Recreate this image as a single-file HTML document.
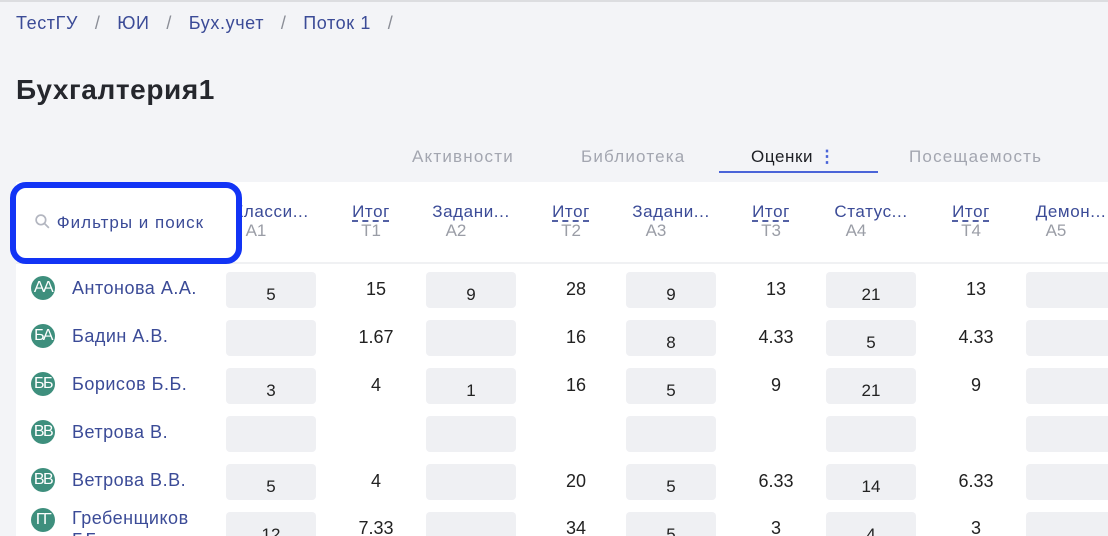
<!DOCTYPE html><html style="height:536px;overflow:hidden"><head><meta charset="utf-8"><style>
body{margin:0;width:1108px;height:536px;overflow:hidden;background:#f3f4f7;font-family:"Liberation Sans","Noto Sans CJK SC",sans-serif;position:relative}
.a{position:absolute;white-space:nowrap}
.bc{top:13px;font-size:18px;letter-spacing:0.6px;color:#3b4b97}
.sl{color:#8a8d96}
.tab{top:147px;font-size:17px;letter-spacing:1.2px;color:#a3a6b0}
.card{position:absolute;left:16px;top:182px;width:1092px;height:354px;background:#fff}
.hl{left:16px;top:262px;width:1092px;height:2px;background:#f0f1f3}
.h{width:100px;text-align:center;font-size:17px;letter-spacing:0.6px;color:#3b4b97;top:202px}
.h u{text-decoration:underline dashed #3b4b97;text-underline-offset:4px}
.s{width:100px;text-align:center;font-size:17px;color:#9a9da6;top:221px}
.b{width:90px;height:36px;background:#eff0f3;border-radius:4px;text-align:center;font-size:17px;color:#222;line-height:46px}
.t{width:100px;text-align:center;font-size:18px;color:#222}
.av{left:31px;width:24px;height:24px;border-radius:50%;background:#3e8f7d;color:#fff;font-size:16px;text-align:center;line-height:24px;letter-spacing:-1.5px}
.n{left:72px;font-size:18px;letter-spacing:0.5px;color:#3b4b97}
</style></head><body>
<div class="a" style="left:0;top:0;width:1108px;height:2px;background:#dcdde0"></div>
<div class="a bc" style="left:16px">ТестГУ <span class="sl">&nbsp;&nbsp;/&nbsp;&nbsp;</span> ЮИ <span class="sl">&nbsp;&nbsp;/&nbsp;&nbsp;</span> Бух.учет <span class="sl">&nbsp;&nbsp;/&nbsp;&nbsp;</span> Поток 1 <span class="sl">&nbsp;&nbsp;/</span></div>
<div class="a" style="left:16px;top:74px;font-size:28px;letter-spacing:0.6px;font-weight:bold;color:#25272d">Бухгалтерия1</div>
<div class="a tab" style="left:412px">Активности</div>
<div class="a tab" style="left:581px">Библиотека</div>
<div class="a tab" style="left:751px;color:#1d1f24;letter-spacing:0.6px">Оценки <span style="color:#4a64d8;font-weight:bold">⋮</span></div>
<div class="a tab" style="left:909px">Посещаемость</div>
<div class="a" style="left:719px;top:171px;width:159px;height:2px;background:#4a64d8"></div>
<div class="card"></div>
<div class="a hl"></div>
<div class="a h" style="left:221px">Класси...</div><div class="a s" style="left:206px">A1</div>
<div class="a h" style="left:321px"><u>Итог</u></div><div class="a s" style="left:321px">T1</div>
<div class="a h" style="left:421px">Задани...</div><div class="a s" style="left:406px">A2</div>
<div class="a h" style="left:521px"><u>Итог</u></div><div class="a s" style="left:521px">T2</div>
<div class="a h" style="left:621px">Задани...</div><div class="a s" style="left:606px">A3</div>
<div class="a h" style="left:721px"><u>Итог</u></div><div class="a s" style="left:721px">T3</div>
<div class="a h" style="left:821px">Статус...</div><div class="a s" style="left:806px">A4</div>
<div class="a h" style="left:921px"><u>Итог</u></div><div class="a s" style="left:921px">T4</div>
<div class="a h" style="left:1021px">Демон...</div><div class="a s" style="left:1006px">A5</div>
<div class="a" style="left:10px;top:182px;width:220px;height:70px;border:6px solid #1234f5;border-radius:16px;background:#fff"></div>
<div class="a" style="left:34px;top:213px;font-size:17px;letter-spacing:1px;color:#3b4b97"><svg width="17" height="17" style="vertical-align:-2px" viewBox="0 0 16 16"><circle cx="6.5" cy="6.5" r="4.5" fill="none" stroke="#b3b6c0" stroke-width="1.6"/><path d="M10 10l4 4" stroke="#b3b6c0" stroke-width="1.6"/></svg> Фильтры и поиск</div>

<div class="a av" style="top:276px">АА</div><div class="a n" style="top:278px">Антонова А.А.</div>
<div class="a b" style="left:226px;top:272px">5</div><div class="a t" style="left:326px;top:279px">15</div>
<div class="a b" style="left:426px;top:272px">9</div><div class="a t" style="left:526px;top:279px">28</div>
<div class="a b" style="left:626px;top:272px">9</div><div class="a t" style="left:726px;top:279px">13</div>
<div class="a b" style="left:826px;top:272px">21</div><div class="a t" style="left:926px;top:279px">13</div>
<div class="a b" style="left:1026px;top:272px"></div>

<div class="a av" style="top:324px">БА</div><div class="a n" style="top:326px">Бадин А.В.</div>
<div class="a b" style="left:226px;top:320px"></div><div class="a t" style="left:326px;top:327px">1.67</div>
<div class="a b" style="left:426px;top:320px"></div><div class="a t" style="left:526px;top:327px">16</div>
<div class="a b" style="left:626px;top:320px">8</div><div class="a t" style="left:726px;top:327px">4.33</div>
<div class="a b" style="left:826px;top:320px">5</div><div class="a t" style="left:926px;top:327px">4.33</div>
<div class="a b" style="left:1026px;top:320px"></div>

<div class="a av" style="top:372px">ББ</div><div class="a n" style="top:374px">Борисов Б.Б.</div>
<div class="a b" style="left:226px;top:368px">3</div><div class="a t" style="left:326px;top:375px">4</div>
<div class="a b" style="left:426px;top:368px">1</div><div class="a t" style="left:526px;top:375px">16</div>
<div class="a b" style="left:626px;top:368px">5</div><div class="a t" style="left:726px;top:375px">9</div>
<div class="a b" style="left:826px;top:368px">21</div><div class="a t" style="left:926px;top:375px">9</div>
<div class="a b" style="left:1026px;top:368px"></div>

<div class="a av" style="top:420px">ВВ</div><div class="a n" style="top:422px">Ветрова В.</div>
<div class="a b" style="left:226px;top:416px"></div>
<div class="a b" style="left:426px;top:416px"></div>
<div class="a b" style="left:626px;top:416px"></div>
<div class="a b" style="left:826px;top:416px"></div>
<div class="a b" style="left:1026px;top:416px"></div>

<div class="a av" style="top:468px">ВВ</div><div class="a n" style="top:470px">Ветрова В.В.</div>
<div class="a b" style="left:226px;top:464px">5</div><div class="a t" style="left:326px;top:471px">4</div>
<div class="a b" style="left:426px;top:464px"></div><div class="a t" style="left:526px;top:471px">20</div>
<div class="a b" style="left:626px;top:464px">5</div><div class="a t" style="left:726px;top:471px">6.33</div>
<div class="a b" style="left:826px;top:464px">14</div><div class="a t" style="left:926px;top:471px">6.33</div>
<div class="a b" style="left:1026px;top:464px"></div>

<div class="a av" style="top:508px">ГГ</div><div class="a n" style="top:507px;line-height:22px">Гребенщиков<br>Г.Г.</div>
<div class="a b" style="left:226px;top:512px">12</div><div class="a t" style="left:326px;top:518px">7.33</div>
<div class="a b" style="left:426px;top:512px"></div><div class="a t" style="left:526px;top:518px">34</div>
<div class="a b" style="left:626px;top:512px">5</div><div class="a t" style="left:726px;top:518px">3</div>
<div class="a b" style="left:826px;top:512px">4</div><div class="a t" style="left:926px;top:518px">3</div>
<div class="a b" style="left:1026px;top:512px"></div>
</body></html>
